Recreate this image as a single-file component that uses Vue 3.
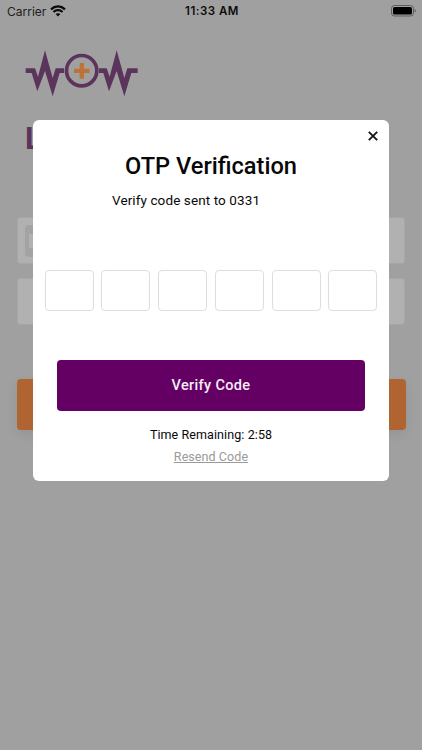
<script setup>
const digits = [1, 2, 3, 4, 5, 6]
</script>

<template>
  <div class="screen">
    <header class="status">
      <div class="carrier">
        <span class="carrier-name">Carrier</span>
        <svg class="wifi" viewBox="0 0 16 12" width="16" height="12">
          <path d="M1 4.3C5 .5 11 .5 15 4.3M3.500 7C6 4.600 10 4.600 12.500 7" fill="none" stroke="#0a0a0a" stroke-width="2.300" />
          <path d="M5.600 9.100C7 7.900 9 7.900 10.400 9.100L8 11.600Z" fill="#0a0a0a" />
        </svg>
      </div>
      <span class="clock">11:33 AM</span>
      <svg class="battery" viewBox="0 0 26 12" width="26" height="12">
        <rect x=".5" y=".5" width="22" height="10.500" rx="3" fill="none" stroke="#5e5e5e" />
        <rect x="2" y="2" width="19" height="7.500" rx="1.600" fill="#000" />
        <path d="M23.600 4q1.300.4 1.300 1.800t-1.300 1.800z" fill="#5e5e5e" />
      </svg>
    </header>

    <main class="page">
      <svg class="logo" viewBox="0 0 390 195" width="130" height="65">
        <g fill="#5b345c">
          <path d="M17 85H45L54 110L75 31L98 114L107 85H132V99H119L98 169L75 93L52 154L35 99H17Z" />
          <path d="M237 85H260L269 110L290 31L313 114L322 85H353V99H334L313 169L290 93L267 154L250 99H237Z" />
        </g>
        <circle cx="185" cy="92" r="45.500" fill="none" stroke="#5b345c" stroke-width="11" />
        <path d="M162 92.500H209M185.500 69V116" stroke="#bd7338" stroke-width="13" />
      </svg>
      <h1 class="heading">Login</h1>
      <div class="field"><span class="flag"><i></i></span></div>
      <div class="field"></div>
      <div class="submit"></div>
    </main>

    <div class="overlay">
      <section class="modal">
        <svg class="close" viewBox="0 0 10 10" width="10" height="10">
          <path d="M.8.8 9.200 9.200M9.200.8.8 9.200" stroke="#161616" stroke-width="1.900" />
        </svg>
        <h2 class="title">OTP Verification</h2>
        <p class="sent">Verify code sent to 0331</p>
        <div class="boxes">
          <span v-for="n in digits" :key="n" class="box"></span>
        </div>
        <button class="verify"><span>Verify Code</span></button>
        <p class="timer">Time Remaining: 2:58</p>
        <a class="resend">Resend Code</a>
      </section>
    </div>
  </div>
</template>

<style>
body { margin: 0; }
</style>

<style scoped>
.screen {
  position: relative;
  width: 422px;
  height: 750px;
  overflow: hidden;
  background: #a0a0a0;
  font-family: Roboto, "Liberation Sans", sans-serif;
}
.status {
  display: grid;
  grid-template-columns: 1fr auto 1fr;
  align-items: center;
  box-sizing: border-box;
  height: 22px;
  padding: 0 5px 0 7px;
  font-family: Inter, sans-serif;
  color: #0c0c0c;
}
.carrier { display: flex; align-items: center; gap: 4px; }
.carrier-name { font-size: 12px; letter-spacing: 0; color: #202020; }
.wifi { margin-top: -1px; }
.clock { font-size: 11.5px; font-weight: 600; letter-spacing: 0.5px; }
.battery { justify-self: end; margin-top: -1px; }
.page {
  display: flex;
  flex-direction: column;
  padding: 18px 17px 0;
}
.logo { margin-left: 3px; }
.heading {
  margin: 14px 0 0 8px;
  height: 40px;
  line-height: 40px;
  font-size: 31px;
  font-weight: 700;
  color: #5b345b;
}
.field {
  box-sizing: border-box;
  height: 47px;
  margin-top: 58px;
  padding: 7px;
  border: 1px solid #aaa4aa;
  border-radius: 3px;
  background: #b1b1b1;
}
.field + .field { margin-top: 14px; }
.flag {
  display: flex;
  align-items: center;
  box-sizing: border-box;
  width: 40px;
  height: 32px;
  padding-left: 4px;
  border-radius: 4px;
  background: #a3a3a3;
}
.flag i { width: 28px; height: 14px; background: #b1b1b1; }
.submit {
  height: 51px;
  margin: 54px -1px 0 0;
  border-radius: 4px;
  background: #af6432;
  box-shadow: 0 4px 12px rgba(0, 0, 0, 0.08);
}
.overlay {
  position: absolute;
  inset: 0;
  display: flex;
  align-items: flex-start;
  justify-content: center;
  padding-top: 119.5px;
}
.modal {
  display: flex;
  flex-direction: column;
  align-items: center;
  box-sizing: border-box;
  width: 356px;
  height: 361px;
  padding-top: 11px;
  border-radius: 6px;
  background: #fff;
  color: #080808;
}
.close { align-self: flex-end; margin-right: 11.5px; }
.title {
  margin: 10.5px 0 0;
  height: 30px;
  line-height: 30px;
  font-size: 23.6px;
  font-weight: 500;
  white-space: nowrap;
}
.sent {
  align-self: flex-start;
  margin: 9px 0 0 79px;
  height: 20px;
  line-height: 20px;
  font-size: 13.5px;
  letter-spacing: 0.1px;
  white-space: nowrap;
}
.boxes { display: flex; gap: 7.700px; margin-top: 60px; }
.box {
  box-sizing: border-box;
  width: 49px;
  height: 41px;
  border: 1px solid #dedede;
  border-radius: 4px;
}
.verify {
  width: 308px;
  height: 51px;
  margin: 49px 0 0;
  padding: 0;
  border: 0;
  border-radius: 4px;
  background: #640064;
  color: #f6edf6;
  font-family: inherit;
  font-size: 14.5px;
  font-weight: 500;
  letter-spacing: 0.35px;
}
.timer {
  margin: 13.5px 0 0;
  height: 20px;
  line-height: 20px;
  font-size: 12.5px;
  letter-spacing: 0.09px;
}
.resend {
  margin-top: 2.5px;
  height: 20px;
  line-height: 20px;
  font-size: 12.5px;
  letter-spacing: 0.08px;
  color: #9a9a9a;
  text-decoration: underline;
}
</style>
